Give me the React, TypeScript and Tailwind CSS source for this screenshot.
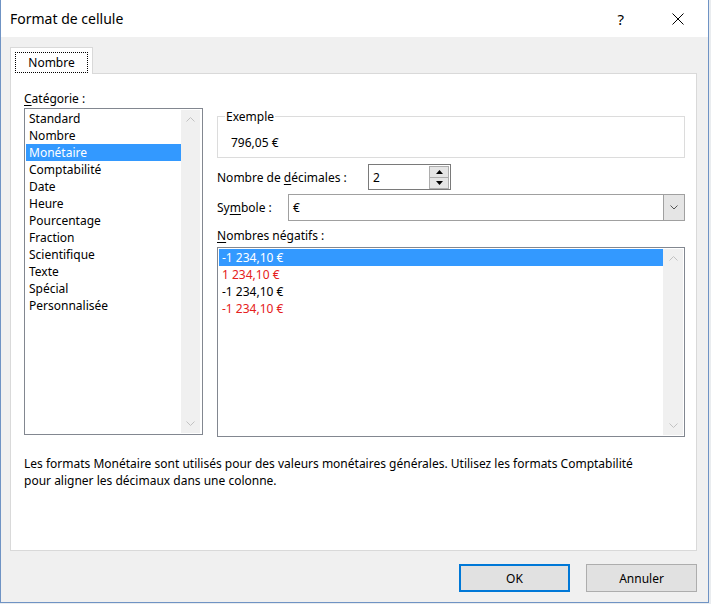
import React from "react";

function Chevron({ dir, color }: { dir: "up" | "down"; color: string }) {
  return (
    <svg width="9" height="5" viewBox="0 0 9 5" className="block">
      <polyline
        points={dir === "up" ? "0.5,4.5 4.5,0.5 8.5,4.5" : "0.5,0.5 4.5,4.5 8.5,0.5"}
        fill="none"
        stroke={color}
        strokeWidth="1"
      />
    </svg>
  );
}

function Triangle({ dir }: { dir: "up" | "down" }) {
  return (
    <svg width="7" height="4" viewBox="0 0 7 4" className="block">
      <polygon points={dir === "up" ? "0,4 3.5,0 7,4" : "0,0 3.5,4 7,0"} fill="#000" />
    </svg>
  );
}

const categories = [
  "Standard",
  "Nombre",
  "Monétaire",
  "Comptabilité",
  "Date",
  "Heure",
  "Pourcentage",
  "Fraction",
  "Scientifique",
  "Texte",
  "Spécial",
  "Personnalisée",
];

const negatives = [
  { t: "-1 234,10 €", kind: "sel" },
  { t: "1 234,10 €", kind: "red" },
  { t: "-1 234,10 €", kind: "black" },
  { t: "-1 234,10 €", kind: "red" },
];

export default function App() {
  return (
    <div className="w-[711px] h-[604px] bg-[#e9ecef] overflow-hidden font-['Noto_Sans','Open_Sans',sans-serif] text-[12px] text-black">
      <div className="w-[709px] h-[603px] flex flex-col border-l border-r border-b border-[#6f93c4]">
        {/* Title bar */}
        <div className="h-[37px] flex-none bg-white flex items-center pl-[9px]">
          <span className="text-[14px] leading-[20px] flex-1">Format de cellule</span>
          <span className="text-[15px] leading-[20px] mr-[48px]">?</span>
          <svg width="12" height="12" viewBox="0 0 12 12" className="mr-[24px]">
            <line x1="0.5" y1="0.5" x2="11.5" y2="11.5" stroke="#000" strokeWidth="1" />
            <line x1="11.5" y1="0.5" x2="0.5" y2="11.5" stroke="#000" strokeWidth="1" />
          </svg>
        </div>

        {/* Client */}
        <div className="flex-1 bg-[#f0f0f0] pl-[9px] pr-[11px] pt-[10px] pb-[10px] flex flex-col">
          {/* Tab */}
          <div className="flex">
            <div className="relative z-10 w-[83px] h-[27px] -mb-[1px] bg-white border-t border-l border-r border-[#d9d9d9] pl-[4px] pt-[4px]">
              <div className="w-[73px] h-[21px] border border-dotted border-black flex items-center justify-center leading-[17px]">
                Nombre
              </div>
            </div>
          </div>

          {/* Panel */}
          <div className="h-[478px] flex-none bg-white border border-[#d9d9d9] pl-[13px] pr-[11px] pt-[15px] flex flex-col">
            <div className="flex gap-[14px]">
              {/* Left column */}
              <div className="w-[179px] flex flex-col">
                <div className="h-[19px] pt-[1px] leading-[17px]">
                  <u className="underline-offset-2">C</u>atégorie :
                </div>
                <div className="h-[327px] border border-[#828790] bg-white p-[1px] flex">
                  <div className="flex-1 flex flex-col">
                    {categories.map((c) => (
                      <div
                        key={c}
                        className={
                          c === "Monétaire"
                            ? "h-[17px] pt-[1px] leading-[16px] pl-[3px] bg-[#3399ff] text-white"
                            : "h-[17px] pt-[1px] leading-[16px] pl-[3px]"
                        }
                      >
                        {c}
                      </div>
                    ))}
                  </div>
                  <div className="w-[19px] mr-[1px] bg-[#f0f0f0] flex flex-col justify-between">
                    <div className="h-[19px] flex items-center justify-center">
                      <Chevron dir="up" color="#c2c2c2" />
                    </div>
                    <div className="h-[19px] flex items-center justify-center">
                      <Chevron dir="down" color="#c2c2c2" />
                    </div>
                  </div>
                </div>
              </div>

              {/* Right column */}
              <div className="w-[468px] flex flex-col pt-[19px]">
                <fieldset className="h-[50px] border border-[#dcdcdc]">
                  <legend className="ml-[7px] px-[1px] leading-[17px]">Exemple</legend>
                  <div className="pt-[9px] pl-[13px] leading-[17px]">796,05 €</div>
                </fieldset>

                <div className="mt-[6px] h-[26px] flex items-center">
                  <span className="w-[151px] leading-[17px]">
                    Nombre de <u className="underline-offset-2">d</u>écimales :
                  </span>
                  <div className="w-[83px] h-[26px] border border-[#7a7a7a] bg-white flex items-center pl-[4px] pr-[1px]">
                    <span className="flex-1 leading-[17px]">2</span>
                    <div className="flex flex-col w-[20px]">
                      <div className="h-[12px] border border-[#adadad] bg-[#e5e5e5] flex items-center justify-center">
                        <Triangle dir="up" />
                      </div>
                      <div className="h-[11px] border border-t-0 border-[#adadad] bg-[#e5e5e5] flex items-center justify-center">
                        <Triangle dir="down" />
                      </div>
                    </div>
                  </div>
                </div>

                <div className="mt-[4px] h-[27px] flex items-center">
                  <span className="w-[71px] leading-[17px]">
                    Sy<u className="underline-offset-2">m</u>bole :
                  </span>
                  <div className="flex-1 h-[27px] border border-[#a0a0a0] bg-white flex items-center">
                    <span className="flex-1 pl-[4px] leading-[17px]">€</span>
                    <div className="w-[21px] h-full bg-[#e5e5e5] border-l border-[#a0a0a0] flex items-center justify-center">
                      <svg width="8" height="5" viewBox="0 0 8 5" className="block">
                        <polyline points="0.5,0.5 4,4 7.5,0.5" fill="none" stroke="#555" strokeWidth="1" />
                      </svg>
                    </div>
                  </div>
                </div>

                <div className="mt-[6px] h-[17px] leading-[17px]">
                  <u className="underline-offset-2">N</u>ombres négatifs :
                </div>

                <div className="mt-[3px] h-[190px] border border-[#828790] bg-white p-[1px] flex">
                  <div className="flex-1 flex flex-col">
                    {negatives.map((n, i) => (
                      <div
                        key={i}
                        className={
                          n.kind === "sel"
                            ? "h-[17px] pt-[1px] leading-[16px] pl-[3px] bg-[#3399ff] text-white"
                            : n.kind === "red"
                            ? "h-[17px] pt-[1px] leading-[16px] pl-[3px] text-[#e52020]"
                            : "h-[17px] pt-[1px] leading-[16px] pl-[3px] text-black"
                        }
                      >
                        {n.t}
                      </div>
                    ))}
                  </div>
                  <div className="w-[20px] bg-[#f0f0f0] flex flex-col justify-between">
                    <div className="h-[19px] flex items-center justify-center">
                      <Chevron dir="up" color="#c2c2c2" />
                    </div>
                    <div className="h-[19px] flex items-center justify-center">
                      <Chevron dir="down" color="#c2c2c2" />
                    </div>
                  </div>
                </div>
              </div>
            </div>

            <p className="mt-[18px] leading-[17px] w-[635px]">
              Les formats Monétaire sont utilisés pour des valeurs monétaires générales. Utilisez les formats Comptabilité
              pour aligner les décimaux dans une colonne.
            </p>
          </div>

          {/* Buttons */}
          <div className="mt-[13px] flex justify-end gap-[16px]">
            <div className="w-[111px] h-[28px] bg-[#e1e1e1] border-2 border-[#0078d7] flex items-center justify-center leading-[17px]">
              OK
            </div>
            <div className="w-[111px] h-[28px] bg-[#e1e1e1] border border-[#adadad] flex items-center justify-center leading-[17px]">
              Annuler
            </div>
          </div>
        </div>
      </div>
    </div>
  );
}
